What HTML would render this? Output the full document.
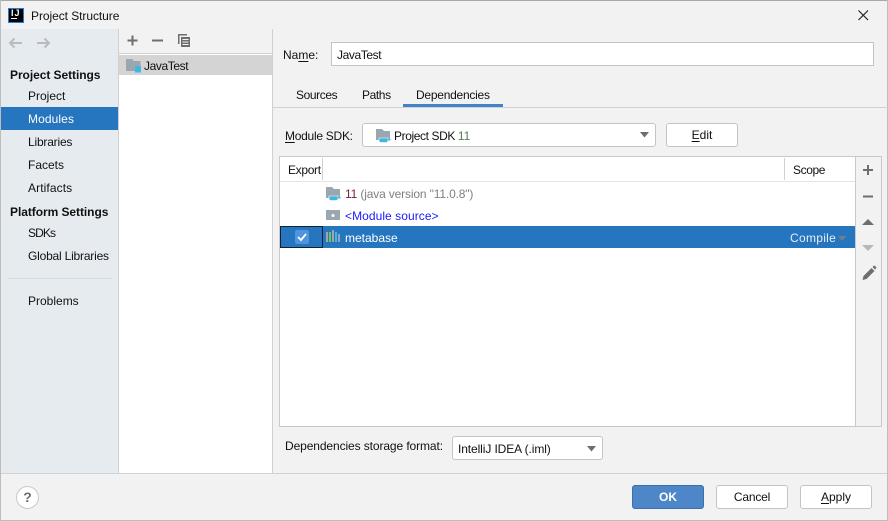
<!DOCTYPE html>
<html><head><meta charset="utf-8">
<style>
html,body{margin:0;padding:0;width:888px;height:521px;overflow:hidden;background:#f2f2f2}
body{position:relative;font-family:"Liberation Sans",sans-serif;font-size:12px;color:#111}
.b{position:absolute;box-sizing:border-box}
.t{position:absolute;white-space:nowrap;line-height:16px;height:16px}
.bold{font-weight:bold}
u{text-decoration-thickness:1px;text-underline-offset:2px}
svg{position:absolute;overflow:visible}
.btn{position:absolute;box-sizing:border-box;background:#fff;border:1px solid #c4c4c4;border-radius:3px;text-align:center;line-height:22px;height:24px}
</style></head><body>
<!-- window frame -->
<div class="b" style="left:0;top:0;width:888px;height:1px;background:#a8a8a8"></div>
<div class="b" style="left:0;top:0;width:1px;height:521px;background:#bdbdbd"></div>
<div class="b" style="left:887px;top:0;width:1px;height:521px;background:#bdbdbd"></div>
<div class="b" style="left:0;top:520px;width:888px;height:1px;background:#bdbdbd"></div>
<!-- title -->
<div class="b" style="left:8px;top:8px;width:16px;height:15px;background:#000;border:1px solid #1a7fe0"></div>
<div class="t bold" style="left:11px;top:5px;color:#fff;font-size:9px;letter-spacing:1px">IJ</div>
<div class="b" style="left:11px;top:18px;width:6px;height:1px;background:#fff"></div>
<div class="t" style="left:31px;top:8px;letter-spacing:-.06px">Project Structure</div>
<svg style="left:858px;top:10px" width="11" height="11"><path d="M.5.5l9.500 9.500M10 .5L.5 10" stroke="#222" stroke-width="1.200"/></svg>
<!-- sidebar -->
<div class="b" style="left:1px;top:29px;width:117px;height:444px;background:#e6ebf0"></div>
<div class="b" style="left:118px;top:29px;width:1px;height:444px;background:#d1d1d1"></div>
<svg style="left:8px;top:37px" width="50" height="12"><path d="M14 6H2M6.500 1.500L2 6l4.500 4.500" fill="none" stroke="#b8bcc0" stroke-width="2"/><path d="M29 6h12M36.500 1.500L41 6l-4.500 4.500" fill="none" stroke="#b8bcc0" stroke-width="2"/></svg>
<div class="t bold" style="left:10px;top:67px;letter-spacing:-.06px">Project Settings</div>
<div class="t" style="left:28px;top:88px">Project</div>
<div class="b" style="left:1px;top:107px;width:117px;height:23px;background:#2675bf"></div>
<div class="t" style="left:28px;top:111px;color:#fff;letter-spacing:.1px">Modules</div>
<div class="t" style="left:28px;top:134px;letter-spacing:-.2px">Libraries</div>
<div class="t" style="left:28px;top:157px">Facets</div>
<div class="t" style="left:28px;top:180px;letter-spacing:.1px">Artifacts</div>
<div class="t bold" style="left:10px;top:204px;letter-spacing:-.06px">Platform Settings</div>
<div class="t" style="left:28px;top:225px;letter-spacing:-.9px">SDKs</div>
<div class="t" style="left:28px;top:248px;letter-spacing:-.2px">Global Libraries</div>
<div class="b" style="left:8px;top:278px;width:104px;height:1px;background:#d9dcdf"></div>
<div class="t" style="left:28px;top:293px">Problems</div>
<!-- middle -->
<div class="b" style="left:119px;top:54px;width:153px;height:419px;background:#fff"></div>
<div class="b" style="left:119px;top:53px;width:153px;height:1px;background:#d1d1d1"></div>
<div class="b" style="left:272px;top:29px;width:1px;height:444px;background:#d1d1d1"></div>
<svg style="left:126px;top:34px" width="70" height="14"><path d="M6.500 1.500v10M1.500 6.500h10" stroke="#6e6e6e" stroke-width="2"/><path d="M26 6.500h11" stroke="#6e6e6e" stroke-width="2"/><path d="M52 0h9v1.500h-7.500V10H52z" fill="#6e6e6e"/><path d="M55 3h9v10h-9z" fill="#6e6e6e"/><path d="M56.500 5.500h6M56.500 8h6M56.500 10.500h6" stroke="#f2f2f2"/></svg>
<div class="b" style="left:119px;top:55px;width:153px;height:20px;background:#d4d4d4"></div>
<svg style="left:126px;top:59px" width="16" height="14"><path d="M0 0h6l2 2h6.500v10H0z" fill="#9aa7b0"/><path d="M9 7h6v6.500H9z" fill="#40b6e0"/></svg>
<div class="t" style="left:144px;top:58px;letter-spacing:-.4px">JavaTest</div>
<!-- name -->
<div class="t" style="left:283px;top:47px">Na<u>m</u>e:</div>
<div class="b" style="left:331px;top:42px;width:543px;height:24px;background:#fff;border:1px solid #c4c4c4"></div>
<div class="t" style="left:337px;top:47px;letter-spacing:-.4px">JavaTest</div>
<!-- tabs -->
<div class="t" style="left:296px;top:87px;letter-spacing:-.4px">Sources</div>
<div class="t" style="left:362px;top:87px;letter-spacing:-.4px">Paths</div>
<div class="t" style="left:416px;top:87px;letter-spacing:-.25px">Dependencies</div>
<div class="b" style="left:273px;top:107px;width:615px;height:1px;background:#d1d1d1"></div>
<div class="b" style="left:403px;top:104px;width:100px;height:3px;background:#4083c9"></div>
<!-- sdk -->
<div class="t" style="left:285px;top:128px;letter-spacing:-.27px"><u>M</u>odule SDK:</div>
<div class="btn" style="left:362px;top:123px;width:294px"></div>
<svg style="left:376px;top:129px" width="16" height="15"><path d="M0 0h6l2 2h6v9H0z" fill="#9aa7b0"/><path d="M3 9h9v2.500a2 2 0 0 1-2 2H5a2 2 0 0 1-2-2z" fill="#40b6e0" stroke="#fff" stroke-width=".6"/><path d="M12 10h2.500v1.500H12z" fill="#40b6e0"/></svg>
<div class="t" style="left:394px;top:128px;letter-spacing:-.4px">Project SDK <span style="color:#5c7a5c;letter-spacing:0">11</span></div>
<svg style="left:640px;top:132px" width="10" height="6"><path d="M0 0h9L4.500 5.500z" fill="#6e6e6e"/></svg>
<div class="btn" style="left:666px;top:123px;width:72px"><u>E</u>dit</div>
<!-- table -->
<div class="b" style="left:279px;top:156px;width:603px;height:271px;border:1px solid #c9c9c9;background:#fff"></div>
<div class="b" style="left:280px;top:181px;width:575px;height:1px;background:#e4e4e4"></div>
<div class="b" style="left:322px;top:158px;width:1px;height:22px;background:#d1d1d1"></div>
<div class="b" style="left:784px;top:158px;width:1px;height:22px;background:#d1d1d1"></div>
<div class="t" style="left:288px;top:162px;letter-spacing:-.33px">Export</div>
<div class="t" style="left:793px;top:162px;letter-spacing:-.4px">Scope</div>
<div class="b" style="left:855px;top:157px;width:26px;height:269px;background:#f2f2f2;border-left:1px solid #c9c9c9"></div>
<svg style="left:861px;top:164px" width="16" height="120"><path d="M7 1v10M2 6h10" stroke="#6e6e6e" stroke-width="2"/><path d="M2 32.500h10" stroke="#6e6e6e" stroke-width="2"/><path d="M1 61h12l-6-6z" fill="#6e6e6e"/><path d="M1 81h12l-6 6z" fill="#b8b8b8"/><path d="M1.500 116l1-4 8-8 3 3-8 8zM11.500 103l1-1a1 1 0 0 1 1.500 0l1 1a1 1 0 0 1 0 1.500l-1 1z" fill="#6e6e6e"/></svg>
<!-- rows -->
<svg style="left:326px;top:187px" width="16" height="15"><path d="M0 0h6l2 2h6v9H0z" fill="#9aa7b0"/><path d="M3 9h9v2.500a2 2 0 0 1-2 2H5a2 2 0 0 1-2-2z" fill="#40b6e0" stroke="#fff" stroke-width=".6"/><path d="M12 10h2.500v1.500H12z" fill="#40b6e0"/></svg>
<div class="t" style="left:345px;top:186px;letter-spacing:-.15px"><span style="color:#7a1f3a">11</span> <span style="color:#808080">(java version "11.0.8")</span></div>
<svg style="left:326px;top:210px" width="15" height="10"><path d="M0 0h14v10H0z" fill="#9aa7b0"/><circle cx="7" cy="5.500" r="1.500" fill="#fff"/></svg>
<div class="t" style="left:345px;top:208px;color:#1a1aff;letter-spacing:.06px">&lt;Module source&gt;</div>
<div class="b" style="left:280px;top:226px;width:575px;height:22px;background:#2675bf"></div>
<div class="b" style="left:280px;top:226px;width:43px;height:22px;border:1px solid #0f2233"></div>
<div class="b" style="left:295px;top:230px;width:14px;height:14px;background:#4f94dc;border-radius:2px"></div>
<svg style="left:297px;top:233px" width="10" height="8"><path d="M1 4l3 3 5-6" fill="none" stroke="#fff" stroke-width="1.800"/></svg>
<svg style="left:326px;top:230px" width="15" height="12"><path d="M0 2h2v10H0z" fill="#9aa7b0"/><path d="M3 2h2v10H3z" fill="#7fc04a"/><path d="M6 0h2v12H6z" fill="#9aa7b0"/><path d="M9 2h2v10H9z" fill="#40b6e0"/><path d="M12 4h2v8h-2z" fill="#9aa7b0"/></svg>
<div class="t" style="left:345px;top:230px;color:#fff">metabase</div>
<div class="t" style="left:790px;top:230px;color:#e8eef5;letter-spacing:.3px">Compile</div>
<svg style="left:838px;top:236px" width="9" height="5"><path d="M0 0h8.500L4.200 5z" fill="#6d7f93"/></svg>
<!-- storage format -->
<div class="t" style="left:285px;top:438px;letter-spacing:-.1px">Dependencies storage format:</div>
<div class="btn" style="left:452px;top:436px;width:151px"></div>
<div class="t" style="left:458px;top:441px;letter-spacing:-.1px">IntelliJ IDEA (.iml)</div>
<svg style="left:587px;top:446px" width="10" height="6"><path d="M0 0h9L4.500 5.500z" fill="#6e6e6e"/></svg>
<!-- footer -->
<div class="b" style="left:1px;top:473px;width:886px;height:1px;background:#d1d1d1"></div>
<div class="b" style="left:16px;top:486px;width:23px;height:23px;border-radius:50%;background:#fff;border:1px solid #c9c9c9;text-align:center;line-height:21px;font-weight:bold;font-size:14px;color:#6e6e6e">?</div>
<div class="btn" style="left:632px;top:485px;width:72px;background:#4d87c7;border-color:#3a70ad;color:#fff;font-weight:bold">OK</div>
<div class="btn" style="left:716px;top:485px;width:72px;letter-spacing:-.2px">Cancel</div>
<div class="btn" style="left:800px;top:485px;width:72px"><u>A</u>pply</div>
</body></html>
